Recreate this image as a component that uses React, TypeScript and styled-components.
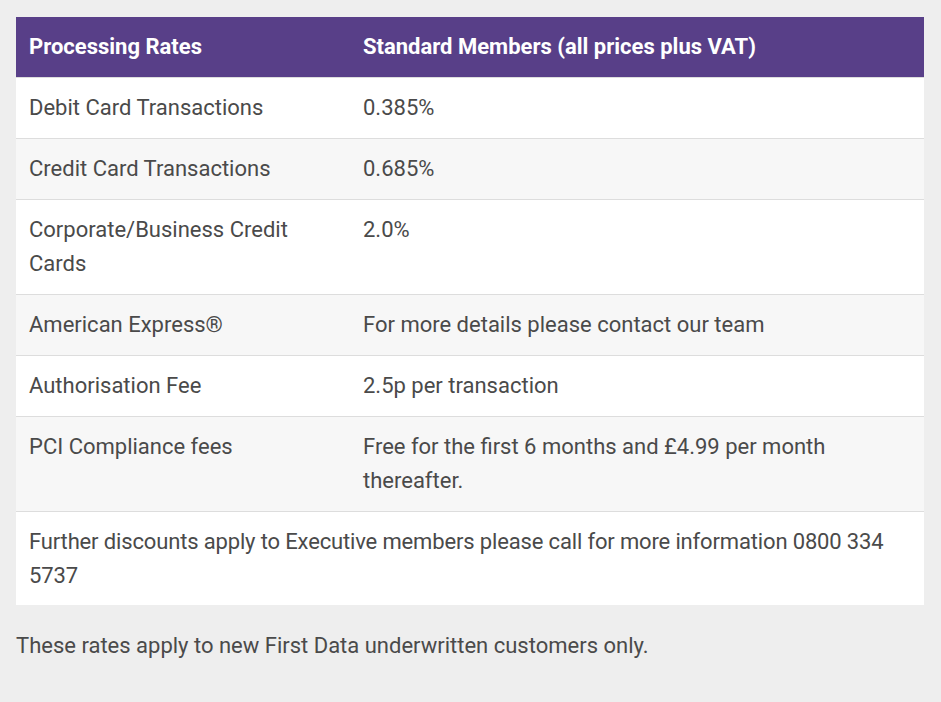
import React from "react";
import styled, { createGlobalStyle } from "styled-components";

const Global = createGlobalStyle`
  html, body { margin: 0; padding: 0; background: #eeeeee; }
  body { font-family: Roboto, "Noto Sans", Arial, sans-serif; color: #4a4a4a; }
`;

const Page = styled.div`
  padding: 17px 17px 0 16px;
`;

const Table = styled.table`
  width: 100%;
  table-layout: fixed;
  border-collapse: collapse;
  font-size: 22px;
  line-height: 34px;
`;

const Col = styled.col<{ $w?: string }>`
  width: ${(p) => p.$w ?? "auto"};
`;

const HeadCell = styled.th`
  background: #583f88;
  color: #ffffff;
  font-weight: 700;
  text-align: left;
  padding: 13px 13px;
  vertical-align: middle;
`;

const Row = styled.tr<{ $alt?: boolean }>`
  background: ${(p) => (p.$alt ? "#f7f7f7" : "#ffffff")};
  border-top: 1px solid #dddddd;
`;

const Cell = styled.td<{ $first?: boolean }>`
  padding: 13px ${(p) => (p.$first ? "16px" : "13px")} 13px 13px;
  vertical-align: top;
`;

const WideCell = styled.td`
  padding: 13px 13px 12px;
  vertical-align: top;
  letter-spacing: -0.15px;
`;

const Note = styled.p`
  margin: 24px 0 0;
  font-size: 22px;
  line-height: 34px;
`;

const rows: [string, string][] = [
  ["Debit Card Transactions", "0.385%"],
  ["Credit Card Transactions", "0.685%"],
  ["Corporate/Business Credit Cards", "2.0%"],
  ["American Express®", "For more details please contact our team"],
  ["Authorisation Fee", "2.5p per transaction"],
  ["PCI Compliance fees", "Free for the first 6 months and £4.99 per month thereafter."],
];

export default function App() {
  return (
    <Page>
      <Global />
      <Table>
        <colgroup>
          <Col $w="334px" />
          <Col />
        </colgroup>
        <thead>
          <tr>
            <HeadCell>Processing Rates</HeadCell>
            <HeadCell>Standard Members (all prices plus VAT)</HeadCell>
          </tr>
        </thead>
        <tbody>
          {rows.map(([a, b], i) => (
            <Row key={a} $alt={i % 2 === 1}>
              <Cell $first>{a}</Cell>
              <Cell>{b}</Cell>
            </Row>
          ))}
          <Row>
            <WideCell colSpan={2}>
              Further discounts apply to Executive members please call for more information 0800 334 5737
            </WideCell>
          </Row>
        </tbody>
      </Table>
      <Note>These rates apply to new First Data underwritten customers only.</Note>
    </Page>
  );
}
